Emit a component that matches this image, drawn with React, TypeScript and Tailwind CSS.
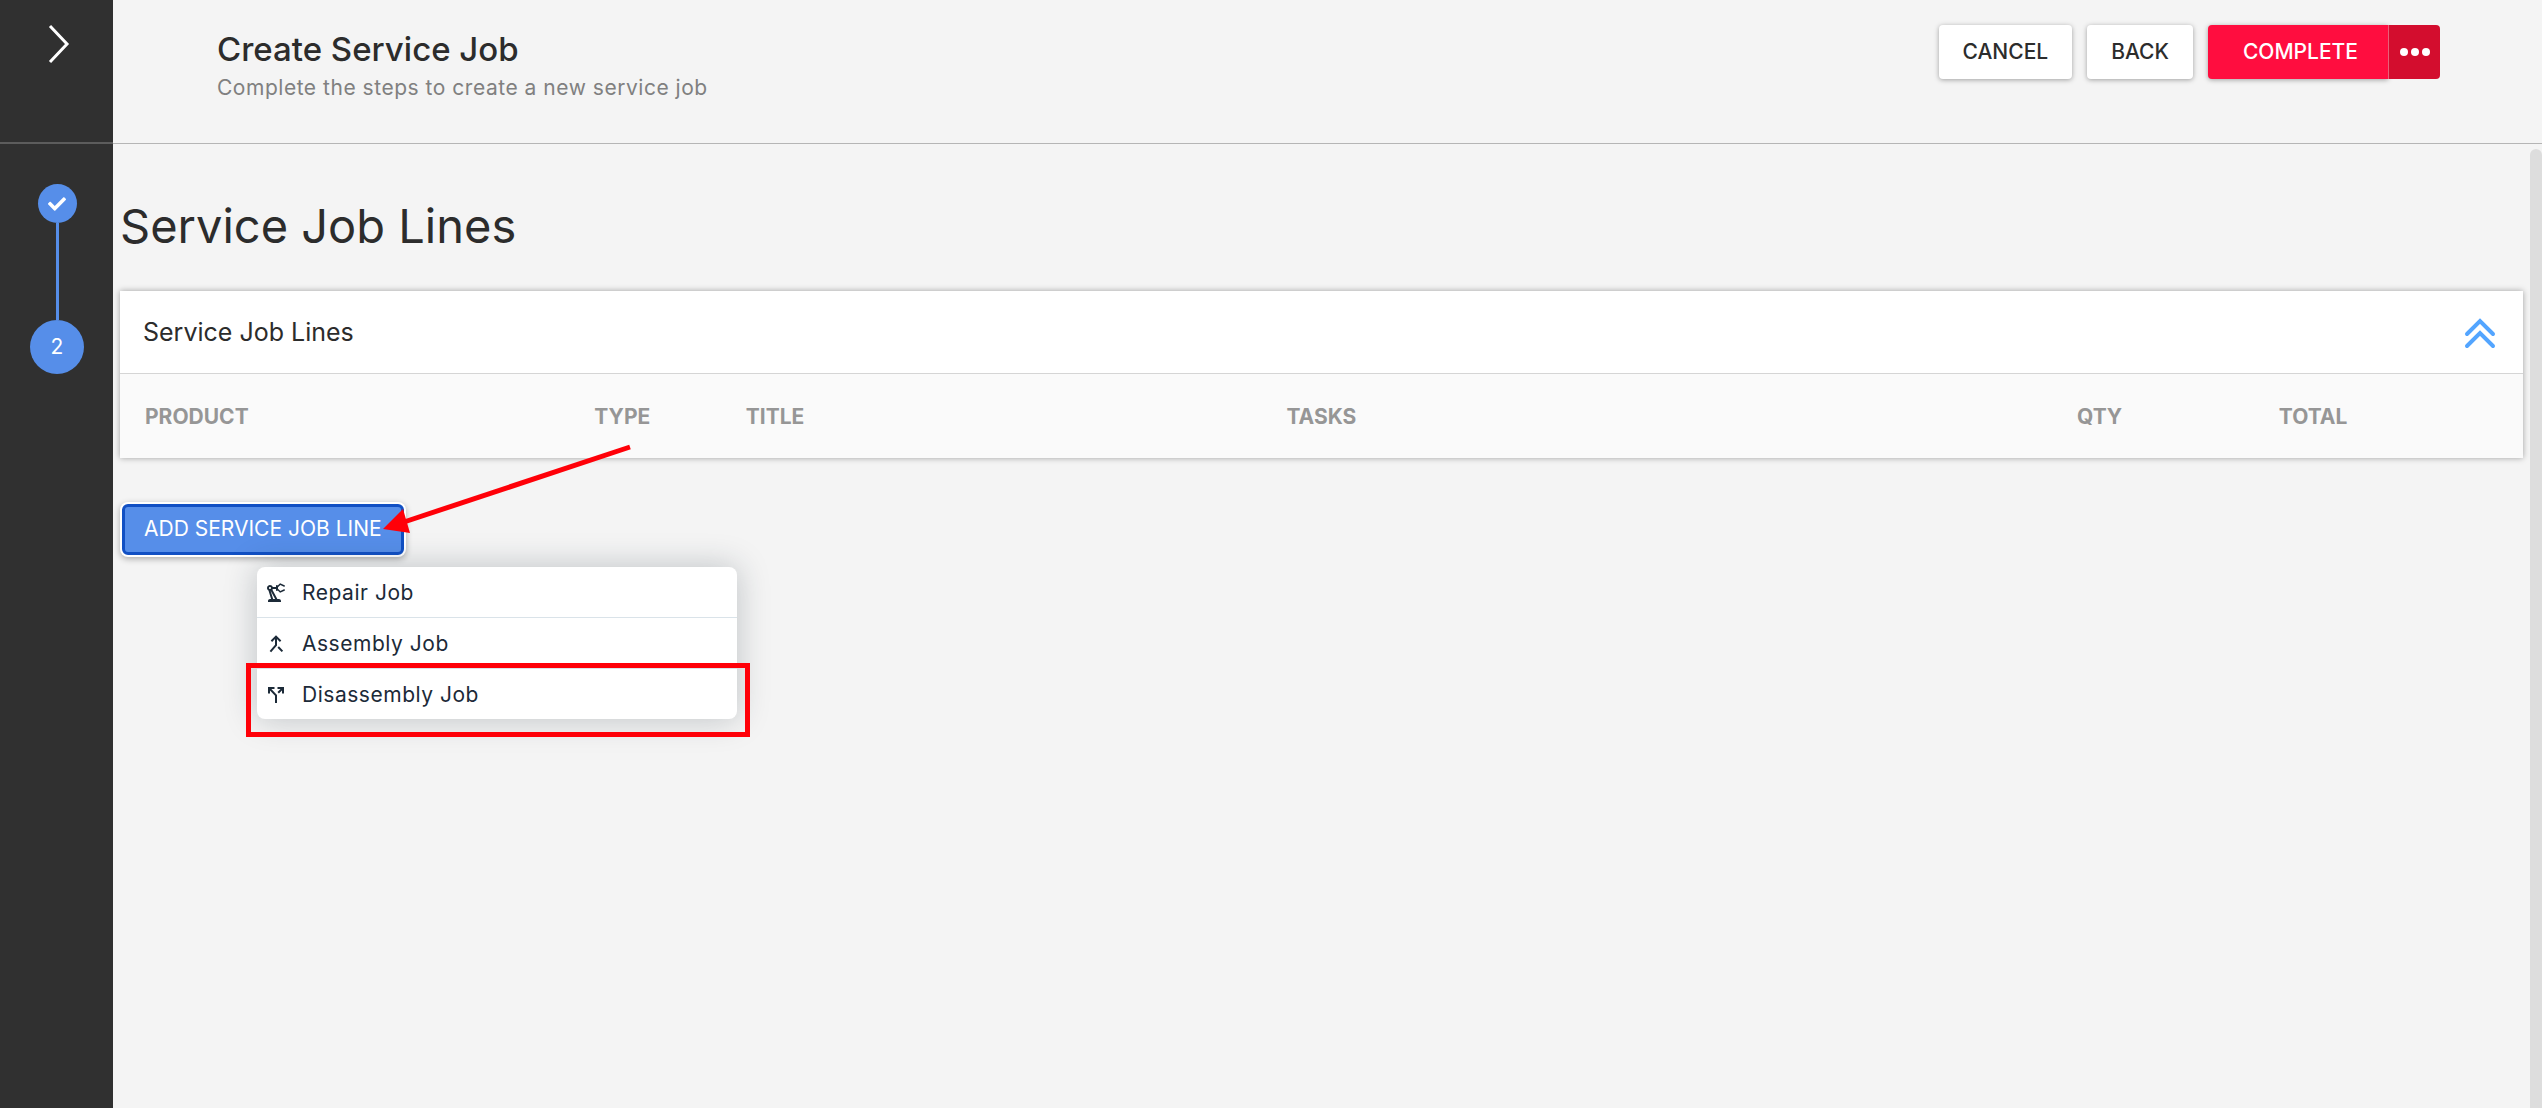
import React, { useState } from 'react';
import { MdOutlinePrecisionManufacturing } from 'react-icons/md';
import { FaCheck } from 'react-icons/fa';

const columns = [
  { label: 'Product', width: 'w-[18.7%]' },
  { label: 'Type', width: 'w-[6.3%]' },
  { label: 'Title', width: 'w-[22.5%]' },
  { label: 'Tasks', width: 'w-[32.9%]' },
  { label: 'Qty', width: 'w-[8.4%]' },
  { label: 'Total', width: 'w-[11.2%]' },
];

const MergeIcon = () => (
  <svg viewBox="0 0 24 24" className="size-6" fill="none" stroke="currentColor" strokeWidth="2">
    <path d="M7.4 9.2 12 4.6l4.6 4.6M12 5v8.2l-5.6 6.4M14.2 15l4.2 4.4" />
  </svg>
);

const SplitIcon = () => (
  <svg viewBox="0 0 24 24" className="size-6" fill="none" stroke="currentColor" strokeWidth="2">
    <path d="M5 10.5V5h5.5M5 5l7 7.4V20M13.5 5H19v5.5M19 5l-4.8 4.8" />
  </svg>
);

const jobTypes = [
  { label: 'Repair Job', icon: <MdOutlinePrecisionManufacturing className="size-6" /> },
  { label: 'Assembly Job', icon: <MergeIcon /> },
  { label: 'Disassembly Job', icon: <SplitIcon /> },
];

const Sidebar: React.FC = () => (
  <aside className="w-[113px] shrink-0 bg-[#303030] text-white">
    <div className="h-36 border-b-2 border-[#5c5c5c] pt-6 pl-12">
      <button type="button" aria-label="Expand menu" className="block">
        <svg viewBox="0 0 22 40" className="h-10 w-[22px]" fill="none" stroke="currentColor" strokeWidth="3">
          <path d="M2 2l17 18L2 38" />
        </svg>
      </button>
    </div>
    <ol className="flex flex-col items-center pt-10 pl-px">
      <li className="flex size-[39px] items-center justify-center rounded-full bg-[#568ee9]">
        <FaCheck className="size-[18px]" />
      </li>
      <li aria-hidden="true" className="h-[97px] w-[3px] bg-[#568ee9]" />
      <li className="flex size-[54px] items-center justify-center rounded-full bg-[#568ee9] text-[21px]">2</li>
    </ol>
  </aside>
);

const Header: React.FC = () => (
  <header className="flex h-36 items-start justify-between border-b border-[#b5b5b5] pr-[102px] pl-[104px]">
    <div className="pt-[27px]">
      <h2 className="text-[33px] leading-[44px] font-medium">Create Service Job</h2>
      <p className="text-[21px] leading-[34px] tracking-wide text-[#808080]">
        Complete the steps to create a new service job
      </p>
    </div>
    <div className="flex gap-[15px] pt-[25px] text-[21px] font-medium">
      <button type="button" className="h-[54px] rounded-sm bg-white px-6 shadow-[0_1px_5px_rgba(0,0,0,0.35)]">
        CANCEL
      </button>
      <button type="button" className="h-[54px] rounded-sm bg-white px-6 shadow-[0_1px_5px_rgba(0,0,0,0.35)]">
        BACK
      </button>
      <div className="flex text-white">
        <button type="button" className="h-[54px] rounded-l-sm bg-[#ff0d3f] pr-[30px] pl-[35px] shadow-[0_1px_5px_rgba(0,0,0,0.35)]">
          COMPLETE
        </button>
        <button
          type="button"
          aria-label="More actions"
          className="relative flex h-[54px] w-[52px] items-center justify-center rounded-r-sm border-l border-[#e8607a] bg-[#d30d2e]"
        >
          <svg viewBox="0 0 30 8" className="h-2 w-[30px]" fill="currentColor">
            <circle cx="4" cy="4" r="4" />
            <circle cx="15" cy="4" r="4" />
            <circle cx="26" cy="4" r="4" />
          </svg>
        </button>
      </div>
    </div>
  </header>
);

const LinesCard: React.FC = () => (
  <section className="bg-white shadow-[0_0_6px_rgba(0,0,0,0.35)]">
    <div className="flex h-[82px] items-center justify-between pt-[2px] pr-[27px] pl-[23px]">
      <h3 className="text-[25px]">Service Job Lines</h3>
      <button type="button" aria-label="Collapse" className="text-[#53a5ff]">
        <svg viewBox="0 0 32 32" className="size-8" fill="none" stroke="currentColor" strokeWidth="4" strokeLinecap="round">
          <path d="M3 17 16 4l13 13M3 29l13-13 13 13" />
        </svg>
      </button>
    </div>
    <table className="w-full table-fixed border-t border-[#d5d5d5] bg-[#fafafa]">
      <thead>
        <tr className="h-[84px] text-left text-[21px] text-[#969696] uppercase">
          {columns.map((column) => (
            <th key={column.label} className={`${column.width} pt-[2px] pl-[25px] font-bold`}>
              {column.label}
            </th>
          ))}
        </tr>
      </thead>
    </table>
  </section>
);

const AddLineMenu: React.FC = () => {
  const [open, setOpen] = useState(true);

  return (
    <div className="relative mt-[46px] ml-[2px] w-fit">
      <button
        type="button"
        aria-expanded={open}
        onClick={() => setOpen(!open)}
        className="block h-[51px] rounded-md border-[3px] border-[#1150c4] bg-[#568ee9] px-[19px] text-[21px] text-white shadow-[0_0_0_2px_#fff,0_2px_6px_2px_rgba(0,0,0,0.3)]"
      >
        ADD SERVICE JOB LINE
      </button>

      {open && (
        <ul className="absolute top-[63px] left-[135px] w-[480px] divide-y divide-[#dae3e9] rounded-lg bg-white text-[#1c2a38] shadow-[0_0_32px_rgba(28,42,56,0.25)]">
          {jobTypes.map((job) => (
            <li key={job.label}>
              <button type="button" className="flex h-[50px] w-full items-center gap-[14px] pt-[2px] pl-[7px] text-[21px] tracking-wide">
                {job.icon}
                {job.label}
              </button>
            </li>
          ))}
        </ul>
      )}

      {/* Callouts */}
      <svg viewBox="0 0 256 96" className="absolute -top-[60px] left-[256px] h-24 w-64" aria-hidden="true">
        <path d="M252 3 20 80" stroke="#ff0008" strokeWidth="5" fill="none" />
        <path d="M5 85 25 65 32 89Z" fill="#ff0008" />
      </svg>
      <div className="absolute top-[159px] left-[124px] h-[74px] w-[504px] border-5 border-[#ff0008]" />
    </div>
  );
};

export default function App() {
  return (
    <div className="flex min-h-screen bg-[#f4f4f4] font-['Inter',sans-serif] text-[#2c2c2c]">
      <Sidebar />
      <div className="flex min-w-0 flex-1 flex-col">
        <Header />
        <div className="flex flex-1">
          <main className="min-w-0 flex-1 px-[7px]">
            <h1 className="pt-[50px] pb-[33px] text-[47px] leading-[64px]">Service Job Lines</h1>
            <LinesCard />
            <AddLineMenu />
          </main>
          <div className="mt-[5px] w-3 rounded-t-full bg-[#dddddd]" />
        </div>
      </div>
    </div>
  );
}
